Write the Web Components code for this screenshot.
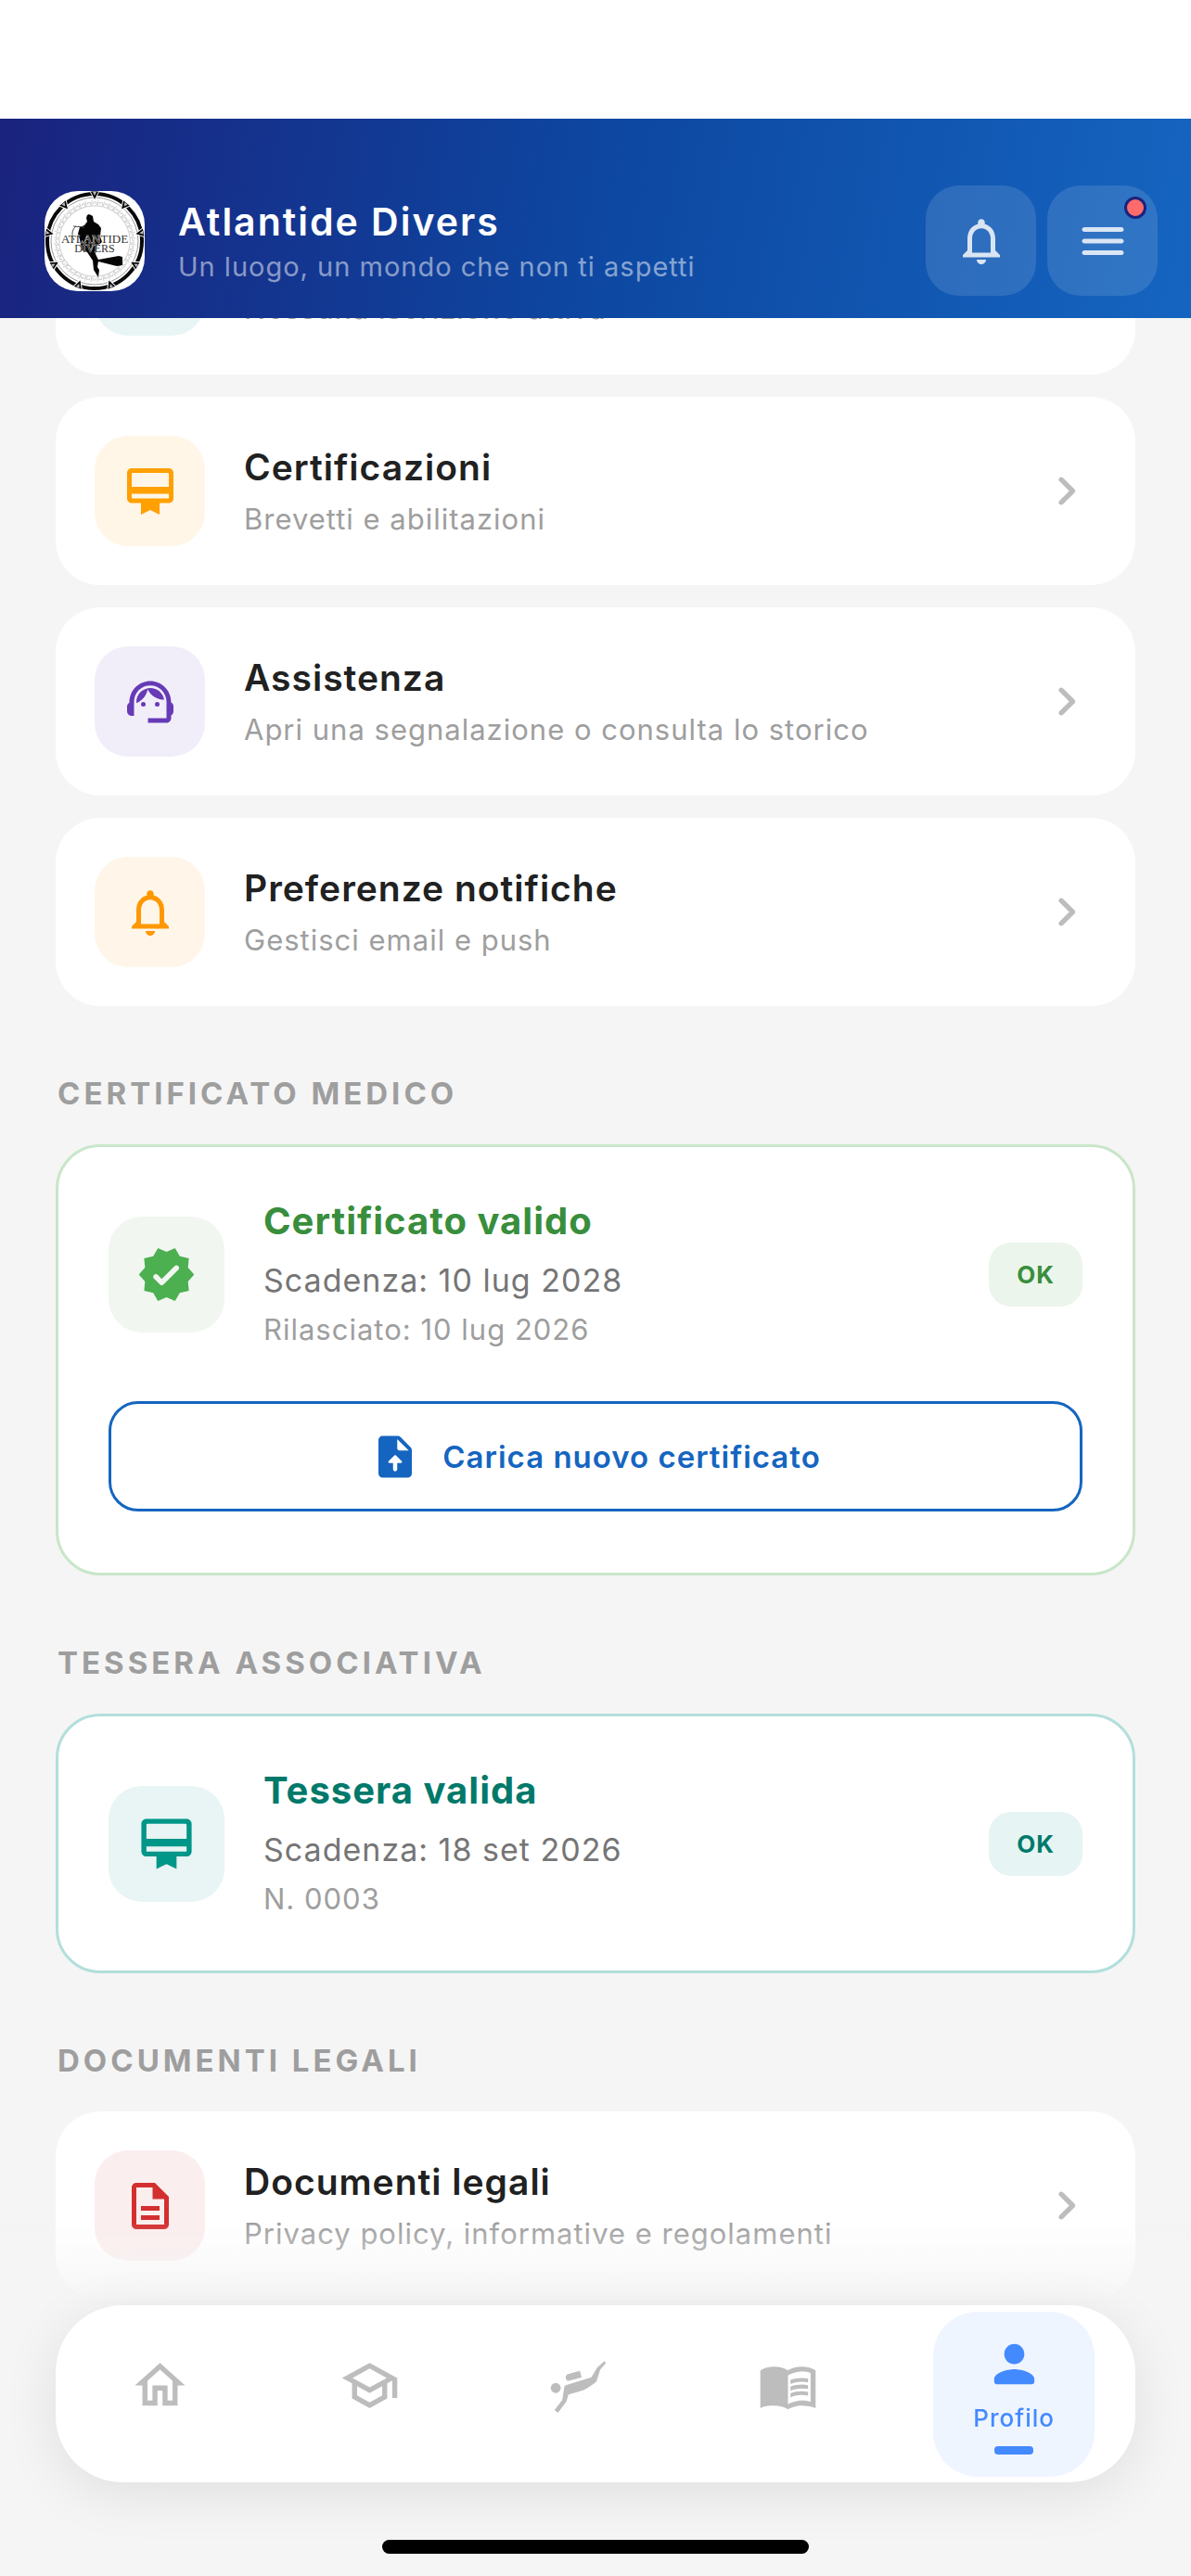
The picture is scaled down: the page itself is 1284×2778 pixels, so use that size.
<!DOCTYPE html>
<html lang="it">
<head>
<meta charset="utf-8">
<meta name="viewport" content="width=device-width, initial-scale=1">
<title>Atlantide Divers – Profilo</title>
<style>
  html, body { margin: 0; height: 100%; }
  body { background: #f5f5f5; font-family: Inter, "Liberation Sans", sans-serif; color: #212121; }
</style>
</head>
<body>

<app-shell>
  <app-header slot="header" heading="Atlantide Divers" tagline="Un luogo, un mondo che non ti aspetti"></app-header>

  <card-list>
    <menu-card subtitle="Nessuna iscrizione attiva" tint="#e8f5f4"></menu-card>
    <menu-card heading="Certificazioni" subtitle="Brevetti e abilitazioni" icon="membership" color="#ffa000" tint="#fff6e8"></menu-card>
    <menu-card heading="Assistenza" subtitle="Apri una segnalazione o consulta lo storico" icon="agent" color="#673ab7" tint="#f1eef9"></menu-card>
    <menu-card heading="Preferenze notifiche" subtitle="Gestisci email e push" icon="bell" color="#ff9800" tint="#fff6e9"></menu-card>
  </card-list>

  <page-section heading="CERTIFICATO MEDICO">
    <status-card heading="Certificato valido" line="Scadenza: 10 lug 2028" note="Rilasciato: 10 lug 2026" badge="OK" icon="verified"
      style="--accent:#388e3c;--icon:#4caf50;--edge:#c8e6c9;--tile:#f1f6f1;--badge:#ebf5eb">
      <outline-button icon="upload">Carica nuovo certificato</outline-button>
    </status-card>
  </page-section>

  <page-section heading="TESSERA ASSOCIATIVA">
    <status-card heading="Tessera valida" line="Scadenza: 18 set 2026" note="N. 0003" badge="OK" icon="membership"
      style="--accent:#00796b;--icon:#009688;--edge:#b2dfdb;--tile:#e8f5f4;--badge:#e6f4f3"></status-card>
  </page-section>

  <page-section heading="DOCUMENTI LEGALI">
    <menu-card heading="Documenti legali" subtitle="Privacy policy, informative e regolamenti" icon="document" color="#d32f2f" tint="#fbeeee"></menu-card>
  </page-section>

  <bottom-nav slot="nav">
    <nav-item icon="home" label="Home"></nav-item>
    <nav-item icon="school" label="Corsi"></nav-item>
    <nav-item icon="diver" label="Immersioni"></nav-item>
    <nav-item icon="book" label="Diario"></nav-item>
    <nav-item icon="person" label="Profilo" active></nav-item>
  </bottom-nav>
</app-shell>

<script>
const ICONS = {
  bell: '<path d="M12 22c1.1 0 2-.9 2-2h-4c0 1.1.9 2 2 2zm6-6v-5c0-3.07-1.63-5.64-4.5-6.32V4c0-.83-.67-1.5-1.5-1.5s-1.5.67-1.5 1.5v.68C7.64 5.36 6 7.92 6 11v5l-2 2v1h16v-1l-2-2zm-2 1H8v-6c0-2.48 1.51-4.5 4-4.5s4 2.02 4 4.5v6z"/>',
  menu: '<path d="M4 18h16c.55 0 1-.45 1-1s-.45-1-1-1H4c-.55 0-1 .45-1 1s.45 1 1 1zm0-5h16c.55 0 1-.45 1-1s-.45-1-1-1H4c-.55 0-1 .45-1 1s.45 1 1 1zM3 7c0 .55.45 1 1 1h16c.55 0 1-.45 1-1s-.45-1-1-1H4c-.55 0-1 .45-1 1z"/>',
  membership: '<path d="M20 2H4c-1.11 0-2 .89-2 2v11c0 1.11.89 2 2 2h4v5l4-2 4 2v-5h4c1.11 0 2-.89 2-2V4c0-1.11-.89-2-2-2zm0 13H4v-2h16v2zm0-5H4V4.500q0-.5.5-.5h15q.5 0 .5.5V10z"/>',
  agent: '<path d="M21 12.22C21 6.73 16.74 3 12 3c-4.69 0-9 3.65-9 9.28-.6.34-1 .98-1 1.72v2c0 1.1.9 2 2 2h1v-6.1c0-3.87 3.13-7 7-7s7 3.13 7 7V19h-8v2h8c1.1 0 2-.9 2-2v-1.22c.59-.31 1-.92 1-1.64v-2.3c0-.7-.41-1.31-1-1.62z"/><circle cx="9" cy="13" r="1"/><circle cx="15" cy="13" r="1"/><path d="M18 11.03C17.52 8.18 15.04 6 12.05 6c-3.03 0-6.29 2.51-6.03 6.45 2.47-1.01 4.33-3.21 4.86-5.89 1.31 2.63 4 4.44 7.12 4.47z"/>',
  document: '<path d="M8 16h8v2H8zm0-4h8v2H8zm6-10H6c-1.1 0-2 .9-2 2v16c0 1.1.89 2 1.99 2H18c1.1 0 2-.9 2-2V8l-6-6zm4 18H6V4h7v5h5v11z"/>',
  chevron: '<path d="M9.29 6.71c-.39.39-.39 1.02 0 1.41L13.17 12l-3.88 3.88c-.39.39-.39 1.02 0 1.41.39.39 1.02.39 1.41 0l4.59-4.59c.39-.39.39-1.02 0-1.41L10.7 6.7c-.38-.38-1.02-.38-1.41.01z"/>',
  verified: '<path d="M23 12l-2.44-2.79.34-3.69-3.61-.82-1.89-3.2L12 2.96 8.6 1.5 6.71 4.69 3.1 5.5l.34 3.7L1 12l2.44 2.79-.34 3.7 3.61.82L8.6 22.5l3.4-1.47 3.4 1.46 1.89-3.19 3.61-.82-.34-3.69L23 12zM9.38 16.01L7 13.61c-.39-.39-.39-1.02 0-1.41l.07-.07c.39-.39 1.03-.39 1.42 0l1.61 1.62 5.15-5.16c.39-.39 1.03-.39 1.42 0l.07.07c.39.39.39 1.02 0 1.41l-5.92 5.94c-.41.39-1.04.39-1.44 0z"/>',
  upload: '<path d="M14.59 2.59c-.38-.38-.89-.59-1.42-.59H6c-1.1 0-2 .9-2 2v16c0 1.1.89 2 1.99 2H18c1.1 0 2-.9 2-2V8.83c0-.53-.21-1.04-.59-1.41l-4.82-4.83zM13 15v3c0 .55-.45 1-1 1s-1-.45-1-1v-3H9.210c-.45 0-.67-.54-.35-.85l2.8-2.79c.2-.19.51-.19.71 0l2.79 2.8c.3.31.08.84-.37.84H13zM13 8V3.500L18.500 9H14c-.55 0-1-.45-1-1z"/>',
  home: '<path d="M12 5.69l5 4.500V18h-2v-6H9v6H7v-7.810l5-4.500M12 3L2 12h3v8h6v-6h2v6h6v-8h3L12 3z"/>',
  school: '<path d="M12 3L1 9l4 2.18v6L12 21l7-3.820v-6l2-1.090V17h2V9L12 3zm6.820 6L12 12.720 5.180 9 12 5.280 18.820 9zM17 15.990l-5 2.730-5-2.730v-3.720L12 15l5-2.730v3.720z"/>',
  diver: '<circle cx="3" cy="13" r="2"/><path d="M7.900 7.500l4.700-1.300.7 2.600-4.700 1.300c-.7.200-1.400-.2-1.600-.9s.2-1.500.9-1.700zM22.400 2.300l.6.700-2.300 2.700-1.500 4.700c-1.400 1.200-3.300 2.600-5.100 3.400-2 .7-4 1.200-6 1.800l-.9 2.900-3.300 4.400L2.500 21.800l3.100-4 .8-5.100c0-.5.5-.8 1.200-1 l9.600-2.900 2.300-3.900z"/>',
  book: '<path d="M17.5 4.500c-1.950 0-4.050.4-5.500 1.500-1.450-1.100-3.550-1.500-5.500-1.500S2.450 4.900 1 6v15c1.450-.8 3.550-1 5.500-1s4.050.4 5.500 1.500c1.350-.85 3.800-1.500 5.500-1.500 1.850 0 4 .3 5.500 1V6c-1.450-1.100-3.550-1.500-5.500-1.500zM21 18.500c-1.100-.35-2.300-.5-3.500-.5-1.700 0-4.150.65-5.500 1.500V8c1.350-.85 3.800-1.500 5.500-1.500 1.200 0 2.400.15 3.500.5v11.500z"/><path d="M17.5 10.500c.88 0 1.730.09 2.500.26V9.240c-.79-.15-1.640-.24-2.500-.24-1.700 0-3.240.29-4.500.83v1.660c1.130-.64 2.700-.99 4.500-.99zM13 12.490v1.660c1.130-.64 2.700-.99 4.500-.99.88 0 1.730.09 2.500.26V11.900c-.79-.15-1.640-.24-2.500-.24-1.700 0-3.240.3-4.500.83zM17.500 14.330c-1.700 0-3.240.29-4.500.83v1.660c1.130-.64 2.700-.99 4.500-.99.88 0 1.730.09 2.500.26v-1.520c-.79-.16-1.640-.24-2.500-.24z"/>',
  person: '<path d="M12 12c2.210 0 4-1.790 4-4s-1.790-4-4-4-4 1.790-4 4 1.790 4 4 4zm0 2c-2.670 0-8 1.340-8 4v1c0 .55.45 1 1 1h14c.55 0 1-.45 1-1v-1c0-2.660-5.330-4-8-4z"/>'
};

class BaseElement extends HTMLElement {
  connectedCallback() {
    if (this.shadowRoot) return;
    this.attachShadow({ mode: 'open' }).innerHTML =
      `<style>*{box-sizing:border-box}:host{display:block;box-sizing:border-box}${this.css()}</style>${this.html()}`;
  }
  attr(name) { return this.getAttribute(name) || ''; }
}

/* <app-icon name size>: a 24-unit glyph filled with the current colour */
customElements.define('app-icon', class extends BaseElement {
  css() { return `:host{flex:none;width:${this.attr('size')}px;height:${this.attr('size')}px}svg{display:block;width:100%;height:100%;fill:currentColor}`; }
  html() { return `<svg viewBox="0 0 24 24" aria-hidden="true" fill-rule="evenodd">${ICONS[this.attr('name')] || ''}</svg>`; }
});

/* Page frame: status area, header, clipped scroll area and floating navigation */
customElements.define('app-shell', class extends BaseElement {
  css() { return `
    :host{display:flex;flex-direction:column;height:100vh;overflow:hidden}
    .status{flex:none;height:128px;background:#fff}
    main{flex:1;min-height:0;overflow:hidden;padding:0 60px}
    .scrolled{margin-top:-142px}
    .dock{position:fixed;left:0;right:0;bottom:0}
  `; }
  html() { return `<div class="status"></div><slot name="header"></slot>
    <main><div class="scrolled"><slot></slot></div></main>
    <div class="dock"><slot name="nav"></slot></div>`; }
});

customElements.define('club-logo', class extends BaseElement {
  css() { return `:host{flex:none;width:108px;height:108px;border-radius:36px;overflow:hidden;background:#fff}svg{display:block}`; }
  html() {
    let teeth = '', marks = '';
    for (let i = 0; i < 9; i++) teeth += `<path transform="rotate(${i * 40} 54 54)" d="M49 0h10l-5 10z" fill="#000" stroke="#fff" stroke-width="1"/><path transform="rotate(${i * 40} 54 54)" d="M52 1h4l-2 4z" fill="#bbb"/>`;
    for (let i = 0; i < 40; i++) marks += `<path transform="rotate(${i * 9} 54 54)" d="M51 10v6h5v-4h-3v2" fill="none" stroke="#cfcfcf" stroke-width="1"/>`;
    return `<svg viewBox="0 0 108 108" width="108" height="108" role="img">
      <circle cx="54" cy="54" r="51" fill="none" stroke="#0a0a0a" stroke-width="4"/>
      <circle cx="54" cy="54" r="47" fill="none" stroke="#999" stroke-width="1"/>
      ${marks}${teeth}
      <path d="M45 29l1-3 2-1 4 2 1 6 5 3 3 4-1 9 2 6-6 5-1 8 3 6 22-4 4 1v9l-6 1-20-5-1 6 2 3-1 8-5-8-1-10-6-9-6-2-2-12-2-6 2-7 5-2 3-4z" fill="#050505"/>
      <path d="M34 38c-5 4-5 10-2 15M31 38l12 1" fill="none" stroke="#444" stroke-width="1"/>
      <text x="54" y="56" text-anchor="middle" font-family="Liberation Serif, serif" font-size="13" fill="#333" stroke="#fff" stroke-width=".6" paint-order="stroke">ATLANTIDE</text>
      <text x="54" y="66" text-anchor="middle" font-family="Liberation Serif, serif" font-size="12" fill="#333" stroke="#fff" stroke-width=".6" paint-order="stroke">DIVERS</text>
    </svg>`;
  }
});

customElements.define('app-header', class extends BaseElement {
  css() { return `
    :host{flex:none;position:relative;z-index:1}
    header{display:flex;align-items:center;gap:36px;padding:72px 36px 24px 48px;color:#fff;
      background:linear-gradient(100deg,#1a237e,#0d47a1 50%,#1565c0)}
    .text{flex:1;min-width:0;display:flex;flex-direction:column;gap:6px}
    h1{margin:0;font-size:41px;line-height:50px;font-weight:600;letter-spacing:2px}
    p{margin:0;font-size:29px;line-height:36px;letter-spacing:1px;color:rgba(255,255,255,.5)}
    .actions{display:flex;gap:12px}
    button{position:relative;display:grid;place-items:center;width:119px;height:119px;padding:0;border:0;border-radius:36px;
      background:rgba(255,255,255,.12);color:rgba(255,255,255,.82)}
    .dot{position:absolute;top:12px;right:12px;width:24px;height:24px;border:3px solid #1a237e;border-radius:50%;background:#ff6b6b}
  `; }
  html() { return `<header><club-logo></club-logo>
    <div class="text"><h1>${this.attr('heading')}</h1><p>${this.attr('tagline')}</p></div>
    <div class="actions">
      <button type="button" aria-label="Notifiche"><app-icon name="bell" size="60"></app-icon></button>
      <button type="button" aria-label="Menu"><app-icon name="menu" size="60"></app-icon><span class="dot"></span></button>
    </div></header>`; }
});

customElements.define('card-list', class extends BaseElement {
  css() { return `:host{display:flex;flex-direction:column;gap:24px}`; }
  html() { return `<slot></slot>`; }
});

customElements.define('page-section', class extends BaseElement {
  css() { return `:host{padding-top:72px}
    h2{margin:0 2px 32px;font-size:33px;line-height:45px;font-weight:700;letter-spacing:4px;color:#9e9e9e}`; }
  html() { return `<h2>${this.attr('heading')}</h2><slot></slot>`; }
});

customElements.define('icon-tile', class extends BaseElement {
  css() { return `:host{flex:none;display:grid;place-items:center;border-radius:36px}`; }
  html() { return `<slot></slot>`; }
});

customElements.define('menu-card', class extends BaseElement {
  css() { return `
    a{display:flex;align-items:center;gap:42px;padding:42px;border-radius:48px;background:#fff;color:inherit;text-decoration:none}
    icon-tile{width:119px;height:119px;background:${this.attr('tint')};color:${this.attr('color')}}
    .text{flex:1;min-width:0;display:flex;flex-direction:column;gap:12px}
    h3{margin:0;min-height:48px;font-size:39px;line-height:48px;font-weight:600;letter-spacing:1px}
    p{margin:0;font-size:31px;line-height:40px;letter-spacing:1px;color:#9e9e9e}
    .go{color:#bdbdbd}
  `; }
  html() { return `<a href="#"><icon-tile><app-icon name="${this.attr('icon')}" size="60"></app-icon></icon-tile>
    <div class="text"><h3>${this.attr('heading')}</h3><p>${this.attr('subtitle')}</p></div>
    <app-icon class="go" name="chevron" size="65"></app-icon></a>`; }
});

customElements.define('status-card', class extends BaseElement {
  css() { return `
    article{padding:54px;border:3px solid var(--edge);border-radius:48px;background:#fff}
    .row{display:flex;align-items:center;gap:42px}
    icon-tile{width:125px;height:125px;background:var(--tile);color:var(--icon)}
    .text{flex:1;min-width:0}
    h3{margin:0 0 12px;font-size:40px;line-height:52px;font-weight:700;letter-spacing:1px;color:var(--accent)}
    p{margin:0}
    .line{margin-bottom:4px;font-size:34px;line-height:52px;letter-spacing:1px;color:#757575}
    .note{font-size:31px;line-height:46px;letter-spacing:1px;color:#9e9e9e}
    .badge{padding:18px 30px;border-radius:24px;background:var(--badge);color:var(--accent);
      font-size:26px;line-height:33px;font-weight:700;letter-spacing:1px}
  `; }
  html() { return `<article><div class="row">
      <icon-tile><app-icon name="${this.attr('icon')}" size="65"></app-icon></icon-tile>
      <div class="text"><h3>${this.attr('heading')}</h3><p class="line">${this.attr('line')}</p><p class="note">${this.attr('note')}</p></div>
      <span class="badge">${this.attr('badge')}</span>
    </div><slot></slot></article>`; }
});

customElements.define('outline-button', class extends BaseElement {
  css() { return `
    :host{padding:54px 0 12px}
    button{display:flex;align-items:center;justify-content:center;gap:24px;width:100%;height:119px;padding:0;
      border:3px solid #1565c0;border-radius:32px;background:#fff;color:#1565c0;
      font-family:inherit;font-size:33px;line-height:42px;font-weight:600;letter-spacing:1px}
  `; }
  html() { return `<button type="button"><app-icon name="${this.attr('icon')}" size="54"></app-icon><span><slot></slot></span></button>`; }
});

customElements.define('bottom-nav', class extends BaseElement {
  css() { return `
    :host{padding:90px 60px 24px;background:linear-gradient(rgba(245,245,245,0),#f5f5f5 96px);display:flex;flex-direction:column;align-items:stretch}
    nav{display:flex;justify-content:space-around;align-items:center;height:191px;border-radius:72px;background:#fff;
      box-shadow:0 12px 60px rgba(0,0,0,.09)}
    .handle{align-self:center;width:460px;height:15px;margin-top:62px;border-radius:8px;background:#000}
  `; }
  html() { return `<nav><slot></slot></nav><div class="handle"></div>`; }
});

customElements.define('nav-item', class extends BaseElement {
  css() { return `
    a{display:flex;flex-direction:column;align-items:center;width:138px;padding:24px 0 42px;border-radius:48px;color:#bdbdbd;text-decoration:none}
    :host([active]) a{width:174px;padding-bottom:24px;background:#eff5ff;color:#448aff}
    .label{margin:8px 0 12px;font-size:26px;line-height:36px;font-weight:500;letter-spacing:1px}
    .bar{width:42px;height:9px;border-radius:4px;background:currentColor}
  `; }
  html() {
    const active = this.hasAttribute('active');
    return `<a href="#" aria-label="${this.attr('label')}"><app-icon name="${this.attr('icon')}" size="65"></app-icon>${
      active ? `<span class="label">${this.attr('label')}</span><span class="bar"></span>` : ''}</a>`;
  }
});
</script>
</body>
</html>
